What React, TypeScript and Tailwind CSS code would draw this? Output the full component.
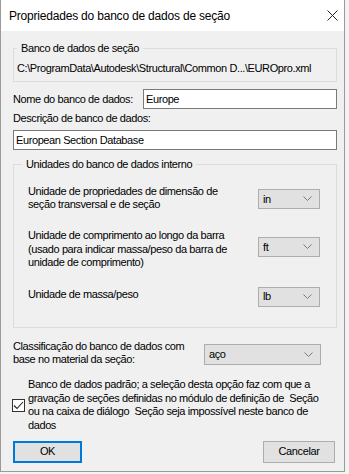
import React from 'react';

const font = { fontFamily: '"Liberation Sans", Arial, sans-serif' };

const Chevron = () => (
  <svg width="9" height="6" viewBox="0 0 9 6" className="shrink-0">
    <path d="M0.5 0.5 L4.5 4.5 L8.5 0.5" fill="none" stroke="#7a7a7a" strokeWidth="1" />
  </svg>
);

const Select = ({ value, className }: { value: string; className: string }) => (
  <div
    className={`flex items-center justify-between h-[20px] border border-[#adadad] bg-[#e1e1e1] pl-[4px] pr-[7px] ${className}`}
  >
    <span>{value}</span>
    <Chevron />
  </div>
);

const App: React.FC = () => {
  return (
    <div className="w-[349px] h-[474px] bg-[#f3f3f3] text-[11px] tracking-[-0.4px] text-black" style={font}>
      <div className="w-[345px] h-[472px] flex flex-col border-l border-r border-b border-[#9a9a9a] bg-[#f0f0f0]">
        {/* barra de título */}
        <div className="h-[31px] bg-white flex items-center justify-between pl-[8px] pr-[6px] shrink-0">
          <span className="text-[12px] tracking-[-0.2px]">Propriedades do banco de dados de seção</span>
          <svg width="11" height="11" viewBox="0 0 11 11">
            <path d="M0.5 0.5 L10.5 10.5 M10.5 0.5 L0.5 10.5" stroke="#222" strokeWidth="1" />
          </svg>
        </div>

        <div className="flex flex-col pl-[12px] pr-[7px] leading-[13px]">
          {/* banco de dados de seção */}
          <fieldset className="mt-[11px] border border-[#dcdcdc] px-[3px] pb-[6px]">
            <legend className="px-[4px] leading-[13px]">Banco de dados de seção</legend>
            <div className="mt-[7px] whitespace-nowrap">C:\ProgramData\Autodesk\Structural\Common D...\EUROpro.xml</div>
          </fieldset>

          <div className="mt-[7px] flex items-center">
            <span className="w-[130px]">Nome do banco de dados:</span>
            <div className="flex-1 h-[20px] bg-white border border-[#7a7a7a] flex items-center pl-[2px]">Europe</div>
          </div>

          <div className="mt-[3px]">Descrição de banco de dados:</div>
          <div className="mt-[5px] h-[20px] bg-white border border-[#7a7a7a] flex items-center pl-[2px]">
            European Section Database
          </div>

          {/* unidades */}
          <fieldset className="mt-[8px] h-[170px] border border-[#dcdcdc] pl-[14px] pr-[16px]">
            <legend className="ml-[-6px] px-[4px] leading-[13px]">Unidades do banco de dados interno</legend>

            <div className="mt-[14px] flex justify-between items-start">
              <div className="leading-[13px]">
                Unidade de propriedades de dimensão de
                <br />
                seção transversal e de seção
              </div>
              <Select value="in" className="w-[62px] mt-[4px]" />
            </div>

            <div className="mt-[18px] flex justify-between items-start">
              <div className="leading-[13.5px]">
                Unidade de comprimento ao longo da barra
                <br />
                (usado para indicar massa/peso da barra de
                <br />
                unidade de comprimento)
              </div>
              <Select value="ft" className="w-[62px] mt-[8px]" />
            </div>

            <div className="mt-[17px] flex justify-between items-start">
              <div className="mt-[1px]">Unidade de massa/peso</div>
              <Select value="lb" className="w-[62px]" />
            </div>
          </fieldset>

          {/* classificação */}
          <div className="mt-[12px] flex justify-between items-start pr-[16px]">
            <div className="leading-[13px]">
              Classificação do banco de dados com
              <br />
              base no material da seção:
            </div>
            <Select value="aço" className="w-[117px] mt-[4px] h-[21px]" />
          </div>

          <div className="mt-[12px] flex items-center ml-[-1px]">
            <div className="w-[13px] h-[13px] border border-[#333] bg-white flex items-center justify-center shrink-0">
              <svg width="11" height="9" viewBox="0 0 11 9">
                <path d="M1 4.5 L4 7.5 L10 1" fill="none" stroke="#222" strokeWidth="1.1" />
              </svg>
            </div>
            <div className="ml-[3px] leading-[13.7px]">
              Banco de dados padrão; a seleção desta opção faz com que a
              <br />
              gravação de seções definidas no módulo de definição de&nbsp; Seção
              <br />
              ou na caixa de diálogo&nbsp; Seção seja impossível neste banco de
              <br />
              dados
            </div>
          </div>

          <div className="mt-[8px] flex justify-between pr-[2px]">
            <button className="w-[69px] h-[22px] border-2 border-[#0078d7] bg-[#e1e1e1] flex items-center justify-center">
              OK
            </button>
            <button className="w-[72px] h-[22px] border border-[#adadad] bg-[#e1e1e1] flex items-center justify-center">
              Cancelar
            </button>
          </div>
        </div>
      </div>
    </div>
  );
};

export default App;
